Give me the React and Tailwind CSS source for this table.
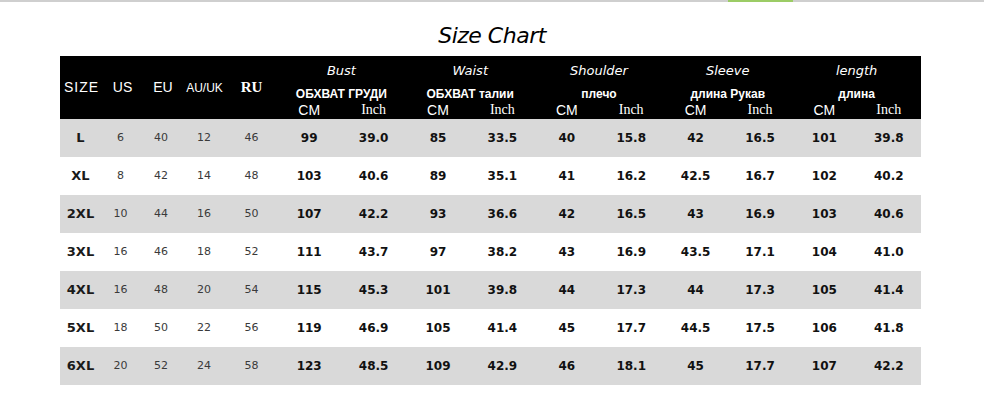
const ROWS = [
  ['L', '6', '40', '12', '46', '99', '39.0', '85', '33.5', '40', '15.8', '42', '16.5', '101', '39.8'],
  ['XL', '8', '42', '14', '48', '103', '40.6', '89', '35.1', '41', '16.2', '42.5', '16.7', '102', '40.2'],
  ['2XL', '10', '44', '16', '50', '107', '42.2', '93', '36.6', '42', '16.5', '43', '16.9', '103', '40.6'],
  ['3XL', '16', '46', '18', '52', '111', '43.7', '97', '38.2', '43', '16.9', '43.5', '17.1', '104', '41.0'],
  ['4XL', '16', '48', '20', '54', '115', '45.3', '101', '39.8', '44', '17.3', '44', '17.3', '105', '41.4'],
  ['5XL', '18', '50', '22', '56', '119', '46.9', '105', '41.4', '45', '17.7', '44.5', '17.5', '106', '41.8'],
  ['6XL', '20', '52', '24', '58', '123', '48.5', '109', '42.9', '46', '18.1', '45', '17.7', '107', '42.2'],
]

const GROUPS = [
  { en: 'Bust', ru: 'ОБХВАТ ГРУДИ' },
  { en: 'Waist', ru: 'ОБХВАТ талии' },
  { en: 'Shoulder', ru: 'плечо' },
  { en: 'Sleeve', ru: 'длина Рукав' },
  { en: 'length', ru: 'длина' },
]

// no handwriting font available, an oblique DejaVu comes closest
const hand = "font-['DejaVu_Sans',sans-serif] italic"
const cols = 'grid grid-cols-[41px_39px_42px_44px_51px_repeat(10,minmax(0,1fr))]'

export default function App() {
  return (
    <div className="w-[984px] h-[416px] bg-white overflow-hidden font-['Liberation_Sans',sans-serif]">
      {/* top strip */}
      <div className="h-[2px] bg-[#cfcfcf]">
        <div className="ml-[728px] w-[65px] h-[2px] bg-[#9ccc65]" />
      </div>

      {/* Title */}
      <div className="h-[54px] flex items-center justify-center pt-[14px]">
        <h1 className={`${hand} text-[22px] text-black leading-none tracking-[-0.5px]`}>Size Chart</h1>
      </div>

      {/* Table */}
      <div className="ml-[60px] w-[861px]">
        {/* Header */}
        <div className="h-[63px] bg-black text-white flex overflow-hidden">
          <div className="w-[217px] flex items-center">
            <span className="w-[41px] text-center text-[14px] tracking-[1px] pl-[2px]">SIZE</span>
            <span className="w-[39px] text-center text-[14px] pl-[4px]">US</span>
            <span className="w-[42px] text-center text-[14px] pl-[4px]">EU</span>
            <span className="w-[44px] text-center text-[12px] pl-[1px]">AU/UK</span>
            <span className="w-[51px] text-center text-[15px] font-bold font-['Liberation_Serif',serif]">RU</span>
          </div>
          <div className="flex-1 grid grid-cols-5">
            {GROUPS.map((g) => (
              <div key={g.en} className="flex flex-col pt-[4px]">
                <div className={`h-[22px] flex items-center justify-center ${hand} text-[13px]`}>{g.en}</div>
                <div className="mt-[3px] h-[18px] flex items-center justify-center text-[12px] font-bold">{g.ru}</div>
                <div className="h-[16px] grid grid-cols-2 leading-[16px] mt-[-1px]">
                  <span className="text-center text-[14px]">CM</span>
                  <span className="text-center text-[14px] font-['Liberation_Serif',serif]">Inch</span>
                </div>
              </div>
            ))}
          </div>
        </div>

        {/* Rows */}
        {ROWS.map((r, i) => (
          <div key={r[0]} className={`${cols} h-[38px] items-center ${i % 2 === 0 ? 'bg-[#d9d9d9]' : 'bg-white'}`}>
            {r.map((cell, j) => {
              let cls = "text-center font-['DejaVu_Sans',sans-serif] "
              if (j === 0) cls += 'text-[13px] font-bold text-[#1a1a1a]'
              else if (j < 5) cls += 'text-[11px] text-[#3a3a3a]'
              else cls += 'text-[12px] font-bold text-[#111]'
              return (
                <span key={j} className={cls}>
                  {cell}
                </span>
              )
            })}
          </div>
        ))}
      </div>
    </div>
  )
}
